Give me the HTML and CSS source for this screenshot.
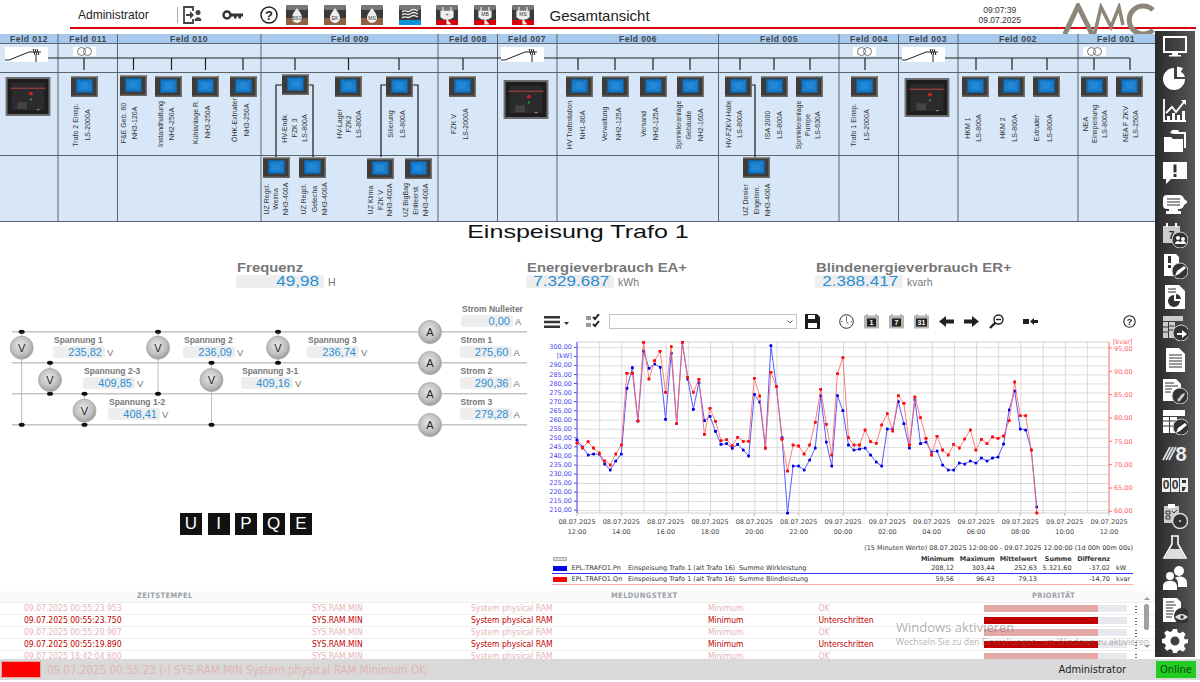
FILE: index.html
```html
<!DOCTYPE html>
<html lang="de">
<head>
<meta charset="utf-8">
<title>Gesamtansicht</title>
<link rel="stylesheet" href="styles.css">
</head>
<body>
<div class="app">
  <header class="top">
    <div class="top-bar">
      <span class="user">Administrator</span>
      <span class="sep"></span>
      <svg class="ic-logout" viewBox="0 0 19 18"><path d="M10 5V1H1v16h9v-4" fill="none" stroke="#444" stroke-width="1.800"/><path d="M3 8h4V5l4 4-4 4v-3H3z" fill="#444"/><circle cx="15" cy="6.500" r="2.500" fill="#444"/><path d="M11.500 15c0-5 7-5 7 0z" fill="#444"/></svg>
      <svg class="ic-key" viewBox="0 0 21 12"><circle cx="5" cy="6" r="3.500" fill="none" stroke="#333" stroke-width="2.400"/><path d="M8 4.500h13v3h-2v2h-2.500v-2h-2v2H12v-2H8z" fill="#333"/></svg>
      <svg class="ic-help" viewBox="0 0 18 18"><circle cx="9" cy="9" r="8" fill="none" stroke="#222" stroke-width="1.500"/><text x="9" y="13.500" class="help-q">?</text></svg>
      <div class="top-btns">
        <svg class="tbtn" viewBox="0 0 22 20"><use href="#drop"/><rect y="13" width="22" height="7" fill="#8f5f43"/><path d="M11 3c2 3 5 6 5 10a5 5 0 0 1-10 0c0-4 3-7 5-10z" fill="#eee"/><text x="11" y="15" class="tbtn-t">BSG</text></svg>
        <svg class="tbtn" viewBox="0 0 22 20"><use href="#drop"/><rect y="13" width="22" height="7" fill="#8f5f43"/><path d="M11 3c2 3 5 6 5 10a5 5 0 0 1-10 0c0-4 3-7 5-10z" fill="#eee"/><text x="11" y="15" class="tbtn-t">EK</text></svg>
        <svg class="tbtn" viewBox="0 0 22 20"><use href="#drop"/><rect y="13" width="22" height="7" fill="#8f5f43"/><path d="M11 3c2 3 5 6 5 10a5 5 0 0 1-10 0c0-4 3-7 5-10z" fill="#eee"/><text x="11" y="15" class="tbtn-t">MS</text></svg>
        <svg class="tbtn" viewBox="0 0 22 20"><use href="#drop"/><rect y="15" width="22" height="5" fill="#0d8fdc"/><path d="M3 7c3-3 5 1 8-1s4-2 8 0M3 10c3-3 5 1 8-1s4-2 8 0M3 13c3-3 5 1 8-1s4-2 8 0" fill="none" stroke="#eee" stroke-width="1.300"/></svg>
        <svg class="tbtn" viewBox="0 0 22 20"><use href="#drop"/><rect y="15" width="22" height="5" fill="#d8000c"/><path d="M7 2v4M15 2v4M5 6h12v6l-3 2H8l-3-2zM11 14v5h4" fill="#eee" stroke="#eee" stroke-width="1.200"/><text x="11" y="11" class="tbtn-t">+</text></svg>
        <svg class="tbtn" viewBox="0 0 22 20"><use href="#drop"/><rect y="15" width="22" height="5" fill="#d8000c"/><path d="M7 2v4M15 2v4M5 6h12v6l-3 2H8l-3-2zM11 14v5h4" fill="#eee" stroke="#eee" stroke-width="1.200"/><text x="11" y="11" class="tbtn-t">MB</text></svg>
        <svg class="tbtn" viewBox="0 0 22 20"><use href="#drop"/><rect y="15" width="22" height="5" fill="#d8000c"/><path d="M7 2v4M15 2v4M5 6h12v6l-3 2H8l-3-2zM11 14v5h4" fill="#eee" stroke="#eee" stroke-width="1.200"/><text x="11" y="11" class="tbtn-t">MS</text></svg>
      </div>
      <span class="page-title">Gesamtansicht</span>
      <div class="clock">09:07:39<br>09.07.2025</div>
    </div>
    <svg class="logo" viewBox="0 0 92 33"><g fill="none" stroke="#8c8778"><path d="M1 33 15 3l15 30" stroke-width="5"/><path d="M31 33 38 4l10 20 8-20 4 18" stroke-width="3.500"/><path d="M90 7a14 14 0 1 0 0 20" stroke-width="5"/></g></svg>
  </header>

  <div class="middle">
    <main class="main">
      <svg class="feld" viewBox="0 31 1155 192">
        <defs>
          <symbol id="drop" viewBox="0 0 22 20"><rect width="22" height="20" rx="2" fill="#3a3a3a"/><rect width="22" height="5" rx="2" fill="#777"/></symbol>
          <symbol id="m" viewBox="0 0 27 21"><rect width="27" height="21" fill="#3f3b38"/><rect width="27" height="1.500" fill="#8a8a88"/><rect x="25.500" width="1.500" height="21" fill="#77736e"/><rect y="19.500" width="27" height="1.500" fill="#6b6763"/><rect x="5" y="3" width="17" height="14" fill="#15609f"/><rect x="6.500" y="4.500" width="14" height="11" fill="#1a7fcf"/><rect x="10" y="7" width="7" height="6" fill="#2288d8"/></symbol>
          <symbol id="b" viewBox="0 0 46 40"><rect width="46" height="40" fill="#6f6f6f"/><rect x="2" y="2" width="42" height="36" fill="#1e1e20"/><rect x="6" y="6" width="34" height="28" fill="#2b2b2d"/><rect x="5" y="11" width="36" height="1" fill="#b44"/><circle cx="26" cy="17" r="2" fill="#c22"/><circle cx="26" cy="23" r="1" fill="#4a4"/><rect x="12" y="26" width="10" height="7" fill="#444"/><rect x="32" y="33" width="3" height="1" fill="#999"/></symbol>
          <symbol id="brk" viewBox="0 0 43 15"><rect width="43" height="15" fill="#fff"/><path d="M0 13h4L24 5h12M28 2l2 6M30 2l2 6M32 2l2 6M31 8v7" fill="none" stroke="#222" stroke-width="1"/></symbol>
          <symbol id="tr" viewBox="0 0 23 9"><rect width="23" height="9" fill="#fff"/><circle cx="8.500" cy="4.500" r="4" fill="none" stroke="#777"/><circle cx="14.500" cy="4.500" r="4" fill="none" stroke="#777"/></symbol>
        </defs>
        <rect x="0" y="34" width="1155" height="188" fill="#d8e7f7"/>
        <rect x="0" y="34" width="1155" height="9" fill="#a7c9ec"/>
        <path class="grid-line" d="M0 43.500H1155M0 72.500H1155M0 155.500H1155M0 221.500H1155M58 34V222M117.500 34V222M261 34V222M438 34V222M497.500 34V222M557 34V222M718.500 34V222M839 34V222M898.500 34V222M958 34V222M1078 34V222"/>
        <g class="feld-head">
          <text x="29" y="39">Feld 012</text><text x="88" y="39">Feld 011</text><text x="189" y="39">Feld 010</text><text x="350" y="39">Feld 009</text><text x="468" y="39">Feld 008</text><text x="527" y="39">Feld 007</text><text x="638" y="39">Feld 006</text><text x="779" y="39">Feld 005</text><text x="869" y="39">Feld 004</text><text x="928" y="39">Feld 003</text><text x="1018" y="39">Feld 002</text><text x="1116" y="39">Feld 001</text>
        </g>
        <path class="bus" d="M5 58H1130M84 58V70M133.500 58V70M171.500 58V70M205.500 58V70M243 58V70M295 58V70M348.500 58V70M399 58V70M463 58V70M578 58V70M615 58V70M653 58V70M690 58V70M740 58V70M774 58V70M810 58V70M865 58V70M976 58V70M1012 58V70M1047 58V70M1094 58V70M1130 58V70"/>
        <use href="#brk" x="5" y="47" width="43" height="15"/><use href="#brk" x="501" y="47" width="43" height="15"/><use href="#brk" x="902" y="47" width="43" height="15"/>
        <use href="#tr" x="73" y="47" width="23" height="9"/><use href="#tr" x="853" y="47" width="23" height="9"/><use href="#tr" x="1083" y="47" width="23" height="9"/>
        <path class="link" d="M282 85H276V157M309 85H313V157M386 85H381V157M413 85H418V157M752 85H755V157"/>
        <g>
          <use href="#b" x="5" y="77" width="46" height="39"/><use href="#b" x="503" y="80" width="46" height="39"/><use href="#b" x="904" y="78" width="46" height="39"/>
          <use href="#m" x="71" y="76" width="27" height="21"/><use href="#m" x="120" y="75" width="27" height="21"/><use href="#m" x="155" y="76" width="27" height="21"/><use href="#m" x="192" y="76" width="27" height="21"/><use href="#m" x="230" y="76" width="27" height="21"/><use href="#m" x="282" y="74" width="27" height="21"/><use href="#m" x="335" y="76" width="27" height="21"/><use href="#m" x="386" y="76" width="27" height="21"/><use href="#m" x="449" y="76" width="27" height="21"/><use href="#m" x="566" y="76" width="27" height="21"/><use href="#m" x="602" y="76" width="27" height="21"/><use href="#m" x="640" y="76" width="27" height="21"/><use href="#m" x="677" y="76" width="27" height="21"/><use href="#m" x="725" y="76" width="27" height="21"/><use href="#m" x="761" y="76" width="27" height="21"/><use href="#m" x="796" y="76" width="27" height="21"/><use href="#m" x="851" y="76" width="27" height="21"/><use href="#m" x="962" y="76" width="27" height="21"/><use href="#m" x="998" y="76" width="27" height="21"/><use href="#m" x="1033" y="76" width="27" height="21"/><use href="#m" x="1081" y="76" width="27" height="21"/><use href="#m" x="1116" y="76" width="27" height="21"/>
          <use href="#m" x="263" y="157" width="27" height="21"/><use href="#m" x="299" y="157" width="27" height="21"/><use href="#m" x="367" y="158" width="27" height="21"/><use href="#m" x="405" y="158" width="27" height="21"/><use href="#m" x="743" y="157" width="27" height="21"/>
        </g>
        <g class="vlab">
          <text transform="translate(75 125) rotate(-90)">Trafo 2 Einsp.</text><text transform="translate(87 125) rotate(-90)">LS-2000A</text>
          <text transform="translate(123 123) rotate(-90)">F&amp;E Geb. 60</text><text transform="translate(134 123) rotate(-90)">NH3-120A</text>
          <text transform="translate(160 124) rotate(-90)">Instandhaltung</text><text transform="translate(171 124) rotate(-90)">NH2-250A</text>
          <text transform="translate(195 122) rotate(-90)">Kühlanlage R.</text><text transform="translate(207 122) rotate(-90)">NH3-250A</text>
          <text transform="translate(234 120) rotate(-90)">ÖHK-Extruder</text><text transform="translate(246 120) rotate(-90)">NH3-250A</text>
          <text transform="translate(284 128) rotate(-90)">HV-Endk.</text><text transform="translate(294 128) rotate(-90)">FZK 3</text><text transform="translate(304 128) rotate(-90)">LS-800A</text>
          <text transform="translate(339 124) rotate(-90)">HV-Lager</text><text transform="translate(348 124) rotate(-90)">FZK2</text><text transform="translate(358 124) rotate(-90)">LS-800A</text>
          <text transform="translate(390 124) rotate(-90)">Silierung</text><text transform="translate(402 124) rotate(-90)">LS-800A</text>
          <text transform="translate(453 124) rotate(-90)">FZK V</text><text transform="translate(465 124) rotate(-90)">LS-2000A</text>
          <text transform="translate(569.500 125) rotate(-90)">HV Trafostation</text><text transform="translate(582 125) rotate(-90)">NH1-80A</text>
          <text transform="translate(604.500 124) rotate(-90)">Verwaltung</text><text transform="translate(618 124) rotate(-90)">NH2-125A</text>
          <text transform="translate(643 124) rotate(-90)">Versand</text><text transform="translate(655 124) rotate(-90)">NH2-125A</text>
          <text transform="translate(678 125) rotate(-90)">Sprinkleranlage</text><text transform="translate(688 125) rotate(-90)">Gebäude</text><text transform="translate(700 125) rotate(-90)">NH2-160A</text>
          <text transform="translate(728 124) rotate(-90)">HV-FZKV-Halle</text><text transform="translate(739.500 124) rotate(-90)">LS-800A</text>
          <text transform="translate(767 125) rotate(-90)">ISA 2000</text><text transform="translate(779.500 125) rotate(-90)">LS-800A</text>
          <text transform="translate(798 125) rotate(-90)">Sprinkleranlage</text><text transform="translate(807 125) rotate(-90)">Pumpe</text><text transform="translate(817 125) rotate(-90)">LS-630A</text>
          <text transform="translate(853.500 125) rotate(-90)">Trafo 1 Einsp.</text><text transform="translate(866 125) rotate(-90)">LS-2000A</text>
          <text transform="translate(967.500 128) rotate(-90)">HKM 1</text><text transform="translate(978 128) rotate(-90)">LS-800A</text>
          <text transform="translate(1002 128) rotate(-90)">HKM 2</text><text transform="translate(1014 128) rotate(-90)">LS-800A</text>
          <text transform="translate(1036 128) rotate(-90)">Extruder</text><text transform="translate(1049 128) rotate(-90)">LS-800A</text>
          <text transform="translate(1085 124) rotate(-90)">NEA</text><text transform="translate(1094 124) rotate(-90)">Einspeisung</text><text transform="translate(1104.500 124) rotate(-90)">LS-800A</text>
          <text transform="translate(1125 124) rotate(-90)">NEA F ZKV</text><text transform="translate(1135.500 124) rotate(-90)">LS-250A</text>
          <text transform="translate(266 199) rotate(-90)">UZ Regcl.</text><text transform="translate(275.500 199) rotate(-90)">Weima</text><text transform="translate(285 199) rotate(-90)">NH3-400A</text>
          <text transform="translate(303.500 199) rotate(-90)">UZ Regcl.</text><text transform="translate(314 199) rotate(-90)">Getecha</text><text transform="translate(324 199) rotate(-90)">NH3-400A</text>
          <text transform="translate(370.500 200) rotate(-90)">UZ Klima</text><text transform="translate(380 200) rotate(-90)">FZK V</text><text transform="translate(389.500 200) rotate(-90)">NH3-400A</text>
          <text transform="translate(405.500 200) rotate(-90)">UZ BigBag</text><text transform="translate(415 200) rotate(-90)">Entleerst.</text><text transform="translate(425.500 200) rotate(-90)">NH3-400A</text>
          <text transform="translate(745.500 200) rotate(-90)">UZ Dosier</text><text transform="translate(756 200) rotate(-90)">Engelsm.</text><text transform="translate(767 200) rotate(-90)">NH3-400A</text>
        </g>
      </svg>

      <h1 class="section-title"><span>Einspeisung Trafo 1</span></h1>

      <section class="energy">
        <div class="kpi"><div class="kpi-label"><span>Frequenz</span></div><div class="kpi-row"><span class="kpi-box"><span>49,98</span></span><span class="kpi-unit">H</span></div></div>
        <div class="kpi"><div class="kpi-label"><span>Energieverbrauch EA+</span></div><div class="kpi-row"><span class="kpi-box"><span>7.329.687</span></span><span class="kpi-unit">kWh</span></div></div>
        <div class="kpi"><div class="kpi-label"><span>Blindenergieverbrauch ER+</span></div><div class="kpi-row"><span class="kpi-box"><span>2.388.417</span></span><span class="kpi-unit">kvarh</span></div></div>
      </section>

      <div class="mid">
        <section class="left-col">
          <div class="wiring">
            <svg class="wiring-svg" viewBox="0 305 540 140">
              <path class="rail" d="M12 331.700H527M12 362.700H527M12 393.700H527M12 424.700H527"/>
              <path class="wire" d="M21.700 331.700V424.700M50 362.700V393.700M84.500 393.700V424.700M158 331.700V393.700M211.500 362.700V424.700M278 331.700V362.700"/>
              <g class="nodes">
                <ellipse cx="21.700" cy="331.700" rx="3" ry="2"/><ellipse cx="21.700" cy="424.700" rx="3" ry="2"/><ellipse cx="50" cy="362.700" rx="3" ry="2"/><ellipse cx="50" cy="393.700" rx="3" ry="2"/><ellipse cx="84.500" cy="393.700" rx="3" ry="2"/><ellipse cx="84.500" cy="424.700" rx="3" ry="2"/><ellipse cx="158" cy="331.700" rx="3" ry="2"/><ellipse cx="158" cy="393.700" rx="3" ry="2"/><ellipse cx="211.500" cy="362.700" rx="3" ry="2"/><ellipse cx="211.500" cy="424.700" rx="3" ry="2"/><ellipse cx="278" cy="331.700" rx="3" ry="2"/><ellipse cx="278" cy="362.700" rx="3" ry="2"/>
              </g>
              <defs><radialGradient id="ball" cx=".45" cy=".4" r=".6"><stop offset="0" stop-color="#e8e8e8"/><stop offset=".7" stop-color="#bdbdbd"/><stop offset="1" stop-color="#9a9a9a"/></radialGradient></defs>
              <g class="meters">
                <circle cx="21.700" cy="347.700" r="11.500"/><circle cx="50" cy="380" r="11.500"/><circle cx="84.500" cy="410.700" r="11.500"/><circle cx="158" cy="347.700" r="11.500"/><circle cx="211.500" cy="380" r="11.500"/><circle cx="278" cy="347.700" r="11.500"/>
                <circle cx="430" cy="332" r="11.500"/><circle cx="430" cy="363" r="11.500"/><circle cx="430" cy="394" r="11.500"/><circle cx="430" cy="425" r="11.500"/>
              </g>
              <g class="meter-t">
                <text x="21.700" y="351.500">V</text><text x="50" y="384">V</text><text x="84.500" y="414.500">V</text><text x="158" y="351.500">V</text><text x="211.500" y="384">V</text><text x="278" y="351.500">V</text>
                <text x="430" y="336">A</text><text x="430" y="367">A</text><text x="430" y="398">A</text><text x="430" y="429">A</text>
              </g>
            </svg>
            <div class="rd u1"><div class="rd-l">Spannung 1</div><div class="rd-r"><span class="rd-v">235,82</span><span class="rd-u">V</span></div></div>
            <div class="rd u2"><div class="rd-l">Spannung 2</div><div class="rd-r"><span class="rd-v">236,09</span><span class="rd-u">V</span></div></div>
            <div class="rd u3"><div class="rd-l">Spannung 3</div><div class="rd-r"><span class="rd-v">236,74</span><span class="rd-u">V</span></div></div>
            <div class="rd u23"><div class="rd-l">Spannung 2-3</div><div class="rd-r"><span class="rd-v">409,85</span><span class="rd-u">V</span></div></div>
            <div class="rd u31"><div class="rd-l">Spannung 3-1</div><div class="rd-r"><span class="rd-v">409,16</span><span class="rd-u">V</span></div></div>
            <div class="rd u12"><div class="rd-l">Spannung 1-2</div><div class="rd-r"><span class="rd-v">408,41</span><span class="rd-u">V</span></div></div>
            <div class="rd i0"><div class="rd-l">Strom Nulleiter</div><div class="rd-r"><span class="rd-v">0,00</span><span class="rd-u">A</span></div></div>
            <div class="rd i1"><div class="rd-l">Strom 1</div><div class="rd-r"><span class="rd-v">275,60</span><span class="rd-u">A</span></div></div>
            <div class="rd i2"><div class="rd-l">Strom 2</div><div class="rd-r"><span class="rd-v">290,36</span><span class="rd-u">A</span></div></div>
            <div class="rd i3"><div class="rd-l">Strom 3</div><div class="rd-r"><span class="rd-v">279,28</span><span class="rd-u">A</span></div></div>
          </div>
          <div class="tabs"><span>U</span><span>I</span><span>P</span><span>Q</span><span>E</span></div>
        </section>

        <section class="chart">
          <div class="toolbar">
            <div class="tb-ham"><svg class="tb16" viewBox="0 0 16 12"><path d="M0 0h16v2.500H0zM0 4.700h16v2.500H0zM0 9.400h16V12H0z" fill="#333"/></svg><svg class="tb-caret" viewBox="0 0 5 3"><path d="M0 0h5L2.500 3z" fill="#333"/></svg></div>
            <svg class="tb15 tb-check" viewBox="0 0 15 15"><path d="M0 2h5v4H0zM0 9h5v4H0z" fill="#999"/><path d="M7 3l2 2 4-5M7 10l2 2 4-5" fill="none" stroke="#222" stroke-width="2"/></svg>
            <div class="tb-select"><svg class="tb-chev" viewBox="0 0 6 4"><path d="M.5.500 3 3 5.500.500" fill="none" stroke="#668" stroke-width="1"/></svg></div>
            <svg class="tb15 tb-save" viewBox="0 0 15 15"><path d="M0 0h12l3 3v12H0z" fill="#1c1c1c"/><path d="M3 1h7v4H3zM3 9h9v5H3z" fill="#fff"/></svg>
            <div class="tb-group">
              <svg class="tb15" viewBox="0 0 15 15"><circle cx="7.500" cy="7.500" r="6.800" fill="none" stroke="#333"/><path d="M7.500 2v5.500l2 3M2 7.500h1.500M11.500 7.500H13" fill="none" stroke="#555" stroke-width=".8"/></svg>
              <svg class="tb15" viewBox="0 0 15 15"><rect y="1.500" width="15" height="13" fill="#b5b5b5"/><path d="M3 0v2M12 0v2" stroke="#888"/><rect x="3" y="4.500" width="9" height="8" fill="#222"/><text x="7.500" y="11.300" class="cal-t">1</text></svg>
              <svg class="tb15" viewBox="0 0 15 15"><rect y="1.500" width="15" height="13" fill="#b5b5b5"/><path d="M3 0v2M12 0v2" stroke="#888"/><rect x="3" y="4.500" width="9" height="8" fill="#222"/><text x="7.500" y="11.300" class="cal-t">7</text></svg>
              <svg class="tb15" viewBox="0 0 15 15"><rect y="1.500" width="15" height="13" fill="#b5b5b5"/><path d="M3 0v2M12 0v2" stroke="#888"/><rect x="2" y="4.500" width="11" height="8" fill="#222"/><text x="7.500" y="11.300" class="cal-t">31</text></svg>
              <svg class="tb15" viewBox="0 0 15 15"><path d="M0 7.500 7 2v3.500h8v4H7V13z" fill="#222"/></svg>
              <svg class="tb15" viewBox="0 0 15 15"><path d="M15 7.500 8 2v3.500H0v4h8V13z" fill="#222"/></svg>
              <svg class="tb15" viewBox="0 0 15 15"><circle cx="9.500" cy="5.500" r="4.500" fill="#fff" stroke="#222" stroke-width="1.400"/><path d="M7 5.500h5" stroke="#222" stroke-width="1.400"/><path d="M6.200 8.800 1 14" stroke="#222" stroke-width="2.400"/></svg>
            </div>
            <svg class="tb15 tb-collapse" viewBox="0 0 15 15"><rect y="5" width="6" height="5" fill="#222"/><path d="M7 7.500 11 4v2h4v3h-4v2z" fill="#222"/></svg>
            <svg class="tb13 tb-help" viewBox="0 0 13 13"><circle cx="6.500" cy="6.500" r="5.700" fill="none" stroke="#222" stroke-width="1.100"/><text x="6.500" y="9.700" class="tb-q">?</text></svg>
          </div>

          <svg class="plot" viewBox="540 335 615 219">
            <defs>
              <pattern id="gridp" x="577" y="347.300" width="22.170" height="9.050" patternUnits="userSpaceOnUse"><path d="M0 .5H22.170M.5 0V9.050" fill="none" stroke="#d9d9d9" stroke-width="1"/></pattern>
              <marker id="mb" viewBox="0 0 4 4" refX="2" refY="2" markerWidth="3.200" markerHeight="3.200" markerUnits="userSpaceOnUse"><circle cx="2" cy="2" r="2" fill="#0000ee"/></marker>
              <marker id="mr" viewBox="0 0 4 4" refX="2" refY="2" markerWidth="3.400" markerHeight="3.400" markerUnits="userSpaceOnUse"><circle cx="2" cy="2" r="2" fill="#ff1010"/></marker>
            </defs>
            <rect x="577" y="342" width="532" height="171" fill="url(#gridp)"/>
            <path class="plot-edge" d="M577 342H1109M577 513H1109"/>
            <path class="ax-b" d="M577 342V513M574 347.300h3M574 356.400h3M574 365.400h3M574 374.500h3M574 383.500h3M574 392.600h3M574 401.600h3M574 410.700h3M574 419.700h3M574 428.800h3M574 437.800h3M574 446.900h3M574 455.900h3M574 465h3M574 474h3M574 483.100h3M574 492.100h3M574 501.200h3M574 510.200h3"/>
            <path class="ax-r" d="M1109 342V513M1109 348h3M1109 371.300h3M1109 394.600h3M1109 418h3M1109 441.300h3M1109 464.600h3M1109 488h3M1109 511.300h3"/>
            <path class="ax-x" d="M577 513v3M621.300 513v3M665.700 513v3M710 513v3M754.300 513v3M798.700 513v3M843 513v3M887.300 513v3M931.700 513v3M976 513v3M1020.300 513v3M1064.700 513v3M1109 513v3"/>
            <g class="lab-l">
              <text x="572" y="347.300">300,00</text><text x="572" y="356.400">[kW]</text><text x="572" y="365.400">290,00</text><text x="572" y="374.500">285,00</text><text x="572" y="383.500">280,00</text><text x="572" y="392.600">275,00</text><text x="572" y="401.600">270,00</text><text x="572" y="410.700">265,00</text><text x="572" y="419.700">260,00</text><text x="572" y="428.800">255,00</text><text x="572" y="437.800">250,00</text><text x="572" y="446.900">245,00</text><text x="572" y="455.900">240,00</text><text x="572" y="465">235,00</text><text x="572" y="474">230,00</text><text x="572" y="483.100">225,00</text><text x="572" y="492.100">220,00</text><text x="572" y="501.200">215,00</text><text x="572" y="510.200">210,00</text>
            </g>
            <g class="lab-r">
              <text x="1113" y="342">[kvar]</text><text x="1114" y="348.500">95,00</text><text x="1114" y="371.500">90,00</text><text x="1114" y="395">85,00</text><text x="1114" y="418.300">80,00</text><text x="1114" y="441.700">75,00</text><text x="1114" y="465">70,00</text><text x="1114" y="488">65,00</text><text x="1114" y="511">60,00</text>
            </g>
            <g class="lab-x">
              <text x="577" y="524">08.07.2025<tspan x="577" dy="9.500">12:00</tspan></text><text x="621.300" y="524">08.07.2025<tspan x="621.300" dy="9.500">14:00</tspan></text><text x="665.700" y="524">08.07.2025<tspan x="665.700" dy="9.500">16:00</tspan></text><text x="710" y="524">08.07.2025<tspan x="710" dy="9.500">18:00</tspan></text><text x="754.300" y="524">08.07.2025<tspan x="754.300" dy="9.500">20:00</tspan></text><text x="798.700" y="524">08.07.2025<tspan x="798.700" dy="9.500">22:00</tspan></text><text x="843" y="524">09.07.2025<tspan x="843" dy="9.500">00:00</tspan></text><text x="887.300" y="524">09.07.2025<tspan x="887.300" dy="9.500">02:00</tspan></text><text x="931.700" y="524">09.07.2025<tspan x="931.700" dy="9.500">04:00</tspan></text><text x="976" y="524">09.07.2025<tspan x="976" dy="9.500">06:00</tspan></text><text x="1020.300" y="524">09.07.2025<tspan x="1020.300" dy="9.500">08:00</tspan></text><text x="1064.700" y="524">09.07.2025<tspan x="1064.700" dy="9.500">10:00</tspan></text><text x="1109" y="524">09.07.2025<tspan x="1109" dy="9.500">12:00</tspan></text>
            </g>
            <text class="range" x="1133" y="550">(15 Minuten Werte) 08.07.2025 12:00:00 - 09.07.2025 12:00:00 (1d 00h 00m 00s)</text>
            <polyline class="s-blue" points="577,440 582.500,447 588.100,455 593.600,454 599.200,454 604.700,464 610.200,470 615.800,461 621.300,454 626.900,388.300 632.400,367.700 637.900,421 643.500,351 649,368.300 654.600,364 660.100,367.300 665.600,419.300 671.200,353.300 676.700,423.700 682.300,342.300 687.800,379 693.300,409.300 698.900,382.700 704.400,420.700 710,416.300 715.500,431.300 721,444.300 726.600,443.700 732.100,448.300 737.700,444.300 743.200,450 748.700,456 754.300,394.300 759.800,402 765.400,448 770.900,345.700 776.400,386.700 782,437.700 787.500,513 793.100,466 798.600,466 804.100,470 809.700,460 815.200,448 820.800,395.700 826.300,442 831.800,466 837.400,395.700 842.900,410.700 848.500,445 854,450 859.500,449 865.100,448 870.600,455 876.200,462 881.700,466 887.200,429 892.800,429 898.300,401.700 903.900,423.700 909.400,448 914.900,399.700 920.500,443.700 926,442 931.600,452 937.100,451 942.600,465 948.200,470 953.700,470 959.300,463 964.800,464 970.300,461 975.900,463 981.400,458 987,461 992.500,458 998,457 1003.600,444 1009.100,410 1014.700,391 1020.200,429 1025.700,430 1031.300,450 1036.800,507"/>
            <polyline class="s-red" points="577,443 582.500,448 588.100,441.700 593.600,448 599.200,453 604.700,461 610.200,465 615.800,454 621.300,445 626.900,373.300 632.400,373.300 637.900,421 643.500,342.300 649,379 654.600,360.700 660.100,351.300 665.600,392.300 671.200,346.700 676.700,423.700 682.300,342.300 687.800,377.300 693.300,392.300 698.900,379.300 704.400,434.300 710,408.300 715.500,421.300 721,440.700 726.600,439.700 732.100,445.700 737.700,437.300 743.200,441.300 748.700,441.300 754.300,378.300 759.800,396 765.400,448 770.900,372.300 776.400,386.700 782,439.300 787.500,471 793.100,445 798.600,446 804.100,454 809.700,445 815.200,422.300 820.800,389.300 826.300,424.300 831.800,455 837.400,373.700 842.900,357.700 848.500,437.700 854,445 859.500,445 865.100,430 870.600,441.700 876.200,443.300 881.700,425 887.200,413.700 892.800,431 898.300,395.700 903.900,403.300 909.400,445 914.900,397 920.500,417.700 926,438.300 931.600,455 937.100,436.300 942.600,450 948.200,455 953.700,444.300 959.300,448 964.800,439 970.300,430 975.900,450 981.400,439.300 987,443.700 992.500,437 998,438.300 1003.600,436 1009.100,420.700 1014.700,382 1020.200,415.700 1025.700,415.700 1031.300,450 1036.800,513"/>
          </svg>

          <div class="legend">
            <div class="lg-row lg-head"><span class="lg-toggle"></span><span></span><span></span><span></span><span class="n">Minimum</span><span class="n">Maximum</span><span class="n">Mittelwert</span><span class="n">Summe</span><span class="n">Differenz</span><span></span></div>
            <div class="lg-row lg-blue"><span class="sw sw-blue"></span><span>EPL.TRAFO1.Pn</span><span>Einspeisung Trafo 1 (alt Trafo 16)</span><span>Summe Wirkleistung</span><span class="n">208,12</span><span class="n">303,44</span><span class="n">252,63</span><span class="n">5.321,60</span><span class="n">-37,02</span><span class="u">kW</span></div>
            <div class="lg-row lg-red"><span class="sw sw-red"></span><span>EPL.TRAFO1.Qn</span><span>Einspeisung Trafo 1 (alt Trafo 16)</span><span>Summe Blindleistung</span><span class="n">59,56</span><span class="n">96,43</span><span class="n">79,13</span><span class="n"></span><span class="n">-14,70</span><span class="u">kvar</span></div>
          </div>
        </section>
      </div>

      <section class="alarms">
        <div class="al-head"><span>ZEITSTEMPEL</span><span>MELDUNGSTEXT</span><span>PRIORITÄT</span></div>
        <div class="al-row off"><span>09.07.2025 00:55:23.953</span><span>SYS.RAM.MIN</span><span>System physical RAM</span><span>Minimum</span><span>OK</span><span class="track"><i class="fill" style="width:80%"></i></span><i class="dots"></i></div>
        <div class="al-row"><span>09.07.2025 00:55:23.750</span><span>SYS.RAM.MIN</span><span>System physical RAM</span><span>Minimum</span><span>Unterschritten</span><span class="track"><i class="fill" style="width:80%"></i></span><i class="dots"></i></div>
        <div class="al-row off"><span>09.07.2025 00:55:20.907</span><span>SYS.RAM.MIN</span><span>System physical RAM</span><span>Minimum</span><span>OK</span><span class="track"><i class="fill" style="width:80%"></i></span><i class="dots"></i></div>
        <div class="al-row"><span>09.07.2025 00:55:19.890</span><span>SYS.RAM.MIN</span><span>System physical RAM</span><span>Minimum</span><span>Unterschritten</span><span class="track"><i class="fill" style="width:80%"></i></span><i class="dots"></i></div>
        <div class="al-row off"><span>09.07.2025 18:42:04.600</span><span>SYS.RAM.MIN</span><span>System physical RAM</span><span>Minimum</span><span>OK</span><span class="track"><i class="fill" style="width:80%"></i></span><i class="dots"></i></div>
        <div class="scroll"><i class="sc-up"></i><i class="sc-thumb"></i><i class="sc-down"></i></div>
        <div class="watermark"><div class="wm-a">Windows aktivieren</div><div class="wm-b">Wechseln Sie zu den Einstellungen, um Windows zu aktivieren.</div></div>
      </section>
    </main>

    <nav class="side">
      <svg viewBox="0 0 26 26"><rect x="2" y="3" width="22" height="15" fill="none" stroke="#fff" stroke-width="2"/><path d="M10 18h6v3h-6zM7 21h12v1.500H7z" fill="#fff"/></svg>
      <svg viewBox="0 0 26 26"><path d="M12 3a11 11 0 1 0 11 11H12z" fill="#fff"/><path d="M15 1.500 21 3l-5 9h-1z" fill="#fff"/><path d="M18 6a11 11 0 0 1 5 6h-8z" fill="#fff"/></svg>
      <svg viewBox="0 0 26 26"><path d="M2 2v22h22" fill="none" stroke="#fff" stroke-width="1.800"/><path d="M4 16l6-6 4 5 8-10" fill="none" stroke="#fff" stroke-width="2"/><path d="M19 3h5v5zM5 19h3v4H5zM10 16h3v7h-3zM15 18h3v5h-3zM20 14h3v9h-3z" fill="#fff"/></svg>
      <svg viewBox="0 0 26 26"><path d="M8 5l2-3h6l1 2h7v16h-2V6H12z" fill="#fff"/><path d="M2 9h7l2 2h10v13H2z" fill="#fff"/></svg>
      <svg viewBox="0 0 26 26"><path d="M1 3h24v17H9l-5 5v-5H1z" fill="#fff"/><path d="M11.500 5.500h3v8h-3zM11.500 15h3v3h-3z" fill="#333"/></svg>
      <svg viewBox="0 0 26 26"><path d="M5 5h13a5 5 0 0 1 4 4l3 2v2l-3 2a5 5 0 0 1-4 4H5a4 4 0 0 1-4-4V9a4 4 0 0 1 4-4z" fill="#fff"/><path d="M5 9h13M5 12h13M5 15h13" stroke="#333" stroke-width="1"/><path d="M7 19h9v2h3v3H4v-3h3z" fill="#fff"/></svg>
      <svg viewBox="0 0 26 26"><path d="M1 4h17v17H1z" fill="#ccc"/><path d="M4 1h2v4H4zM13 1h2v4h-2z" fill="#fff"/><text x="9.500" y="17" class="sd-t">7</text><circle cx="18" cy="18" r="8" fill="#333" stroke="#ccc"/><circle cx="16" cy="16" r="2" fill="#fff"/><circle cx="21" cy="17" r="2" fill="#fff"/><path d="M13 22c0-4 6-4 6 0zM18 22c0-4 6-4 6 0z" fill="#fff"/></svg>
      <svg viewBox="0 0 26 26"><path d="M2 1h12l3 3v13l-3 6H2z" fill="#fff"/><path d="M6 3h3v7H6zM6 12h3v3H6z" fill="#333"/><circle cx="18" cy="18" r="8" fill="#333" stroke="#ccc"/><path d="M13 23l2-5 7-5 2 2-7 6z" fill="#fff"/></svg>
      <svg viewBox="0 0 26 26"><path d="M3 1h14l6 6v18H3z" fill="#fff"/><path d="M6 5h8M6 8h8" stroke="#333"/><path d="M12 11a6 6 0 1 0 6 6h-6z" fill="#333"/><path d="M14 10a6 6 0 0 1 5 5h-5z" fill="#333"/></svg>
      <svg viewBox="0 0 26 26"><path d="M1 1h20v5H1zM1 7h5v16H1zM7 7h6v16H7z" fill="#ccc"/><path d="M7 11h5M7 15h5M1 12h5M1 17h5" stroke="#333"/><circle cx="19" cy="18" r="8" fill="#333" stroke="#ccc"/><path d="M15 18h5v-3l5 4-5 4v-3h-5z" fill="#fff"/></svg>
      <svg viewBox="0 0 26 26"><path d="M4 1h13l6 6v18H4z" fill="#fff"/><path d="M7 8h13M7 11h13M7 14h13M7 17h13M7 20h13" stroke="#333"/></svg>
      <svg viewBox="0 0 26 26"><path d="M1 1h13l5 5v17H1z" fill="#fff"/><path d="M3 5h9M3 8h13M3 11h7M3 14h6" stroke="#333"/><circle cx="18" cy="18" r="8" fill="#333" stroke="#ccc"/><path d="M15 22l5-6 3-1-1 3-5 6z" fill="#ccc"/></svg>
      <svg viewBox="0 0 26 26"><path d="M1 1h22v6H1zM1 8h6v16H1zM8 8h7v16H8z" fill="#fff"/><path d="M1 12h6M1 17h6M8 12h7M8 17h7" stroke="#333"/><circle cx="19" cy="18" r="8" fill="#333" stroke="#ccc"/><path d="M14 24l2-5 7-5 2 2-7 6z" fill="#fff"/></svg>
      <svg viewBox="0 0 26 26"><path d="M1 20 8 7M4 20 11 7M7 20 14 7" stroke="#ddd" stroke-width="1.800"/><text x="19" y="21" class="sd-8">8</text></svg>
      <svg viewBox="0 0 26 26"><path d="M0 6h8v14H0zM9 6h8v14H9zM18 6h8v14h-8z" fill="#eee"/><text x="4" y="17" class="sd-d">0</text><text x="13" y="17" class="sd-d">0</text><path d="M20 8h4v3h-4zM20 15h4l-2 4h-2z" fill="#333"/></svg>
      <svg viewBox="0 0 26 26"><path d="M2 3h15v17H2z" fill="#ccc"/><path d="M6 1h7v4H6z" fill="#fff"/><path d="M4 8h4v3H4zM4 13h4v3H4zM10 8l2 2 3-3" fill="none" stroke="#333"/><circle cx="18" cy="18" r="7.500" fill="#333" stroke="#ddd" stroke-width="1.400"/><circle cx="18" cy="18" r="1" fill="#ddd"/></svg>
      <svg viewBox="0 0 26 26"><path d="M9 2h8M10 2v8L2 24h22L16 10V2" fill="none" stroke="#fff" stroke-width="1.600"/><path d="M8 15h10l5 9H3z" fill="#ddd"/></svg>
      <svg viewBox="0 0 26 26"><circle cx="17" cy="6" r="5" fill="#fff"/><circle cx="8" cy="11" r="4" fill="#fff"/><path d="M1 25v-4c0-7 14-7 14 0v4zM16 22v-3c0-3-1-5-3-6 5-3 12-1 12 5v4z" fill="#fff"/></svg>
      <svg viewBox="0 0 26 26"><path d="M1 1h14l4 4v20H1z" fill="#fff"/><path d="M4 5h8M4 8h10M4 11h7M4 14h8M4 17h7M4 20h6" stroke="#333"/><circle cx="20" cy="19" r="8" fill="#333"/><path d="M13 20c4-4 9-4 13 0-4 4-9 4-13 0z" fill="#ddd"/><circle cx="20" cy="20" r="1.700" fill="#333"/></svg>
      <svg viewBox="0 0 26 26"><path d="M11 1h4l.7 3.300 2.300 1 2.900-1.800 2.800 2.800-1.800 2.900 1 2.300L26 11v4l-3.100.7-1 2.300 1.800 2.900-2.800 2.800-2.900-1.800-2.300 1L15 25h-4l-.7-3.100-2.300-1-2.900 1.800-2.800-2.800L4 18l-1-2.300L0 15v-4l3-.7 1-2.300-1.800-2.900L5 2.300l2.900 1.800 2.300-1zM13 8.500a4.500 4.500 0 1 0 0 9 4.500 4.500 0 0 0 0-9z" fill="#fff" fill-rule="evenodd"/></svg>
    </nav>
  </div>

  <footer class="status">
    <span class="st-red"></span>
    <span class="st-msg">09.07.2025 00:55:23 (-) SYS.RAM.MIN System physical RAM Minimum OK</span>
    <span class="st-user">Administrator</span>
    <span class="st-online">Online</span>
  </footer>
</div>
</body>
</html>
```

FILE: styles.css
```css
* { box-sizing: border-box; }
html, body { margin: 0; padding: 0; background: #fff; }
body { font-family: "Liberation Sans", Arial, sans-serif; color: #222; overflow: hidden; }
svg { display: block; flex: none; }

.app { width: 1200px; height: 682px; display: flex; flex-direction: column; overflow: hidden; }

/* header */
.top { height: 31px; flex: none; position: relative; padding-left: 70px; }
.top-bar { height: 29px; border-bottom: 2px solid #d8000c; display: flex; align-items: center; padding: 3px 0 0 8px; width: 1126px; }
.user { font-size: 12px; width: 69px; color: #222; }
.sep { width: 1px; height: 16px; background: #aaa; margin-left: 30px; }
.ic-logout { width: 19px; height: 18px; margin-left: 5px; }
.ic-key { width: 21px; height: 12px; margin-left: 20px; }
.ic-help { width: 18px; height: 18px; margin-left: 17px; }
.help-q { font: bold 13px "Liberation Sans", sans-serif; text-anchor: middle; fill: #222; }
.top-btns { display: flex; gap: 15.6px; margin-left: 8px; }
.tbtn { width: 22px; height: 20px; }
.tbtn-t { font: 5px "Liberation Sans", sans-serif; text-anchor: middle; fill: #333; }
.page-title { font-size: 15px; margin-left: 16px; color: #222; }
.clock { margin-left: auto; margin-right: 175px; font-size: 8.5px; line-height: 10.5px; text-align: center; color: #333; }
.logo { position: absolute; left: 1063px; top: 3px; width: 92px; height: 33px; }

/* middle */
.middle { flex: none; height: 628px; display: flex; }
.main { width: 1155px; flex: none; display: flex; flex-direction: column; position: relative; }
.side { width: 40px; height: 626px; flex: none; background: linear-gradient(90deg, #2a2a2a, #565656); display: flex; flex-direction: column; align-items: center; justify-content: space-between; padding: 3px 0; }
.side svg { width: 26px; height: 26px; }
.sd-t { font: bold 10px "Liberation Sans", sans-serif; text-anchor: middle; fill: #222; }
.sd-8 { font: bold 20px "Liberation Sans", sans-serif; text-anchor: middle; fill: #eee; }
.sd-d { font: bold 12px "Liberation Sans", sans-serif; text-anchor: middle; fill: #333; }

/* single line diagram */
.feld { width: 1155px; height: 192px; }
.grid-line { stroke: #5b6470; stroke-width: 1; fill: none; }
.feld-head text { font: bold 8.500px "Liberation Sans", sans-serif; letter-spacing: .5px; text-anchor: middle; dominant-baseline: central; fill: #3d4650; }
.bus { stroke: #222; stroke-width: 1.2; fill: none; }
.link { stroke: #1b1b1b; stroke-width: 1.2; fill: none; }
.vlab text { font: 7px "Liberation Sans", sans-serif; text-anchor: middle; dominant-baseline: central; fill: #333; }

.section-title { margin: 0; height: 18px; font-size: 19px; line-height: 18px; font-weight: 400; text-align: center; color: #111; }
.section-title span { display: inline-block; transform: scaleX(1.32); }

.energy { display: grid; grid-template-columns: 290px 289px auto; padding-left: 236px; margin: 20px 0 17px; }
.kpi-label { height: 14px; font-size: 12px; line-height: 14px; font-weight: 700; color: #777; padding-left: 1px; white-space: nowrap; }
.kpi-label span { display: inline-block; transform: scaleX(1.24); transform-origin: 0 50%; }
.kpi-row { display: flex; align-items: center; height: 13px; }
.kpi-box { width: 88px; height: 13px; background: #eee; border-radius: 3px; text-align: right; padding-right: 5px; font-size: 14px; line-height: 13px; color: #2a8fd4; }
.kpi-box span { display: inline-block; transform: scaleX(1.22); transform-origin: 100% 50%; }
.kpi-unit { font-size: 10.500px; color: #777; margin-left: 4px; }

.mid { flex: none; height: 286px; display: flex; }
.left-col { width: 540px; flex: none; }
.wiring { position: relative; width: 540px; height: 140px; }
.wiring-svg { position: absolute; inset: 0; width: 540px; height: 140px; }
.rail { stroke: #c4c4c4; stroke-width: 1.4; fill: none; }
.wire { stroke: #bcbcbc; stroke-width: 1; fill: none; }
.nodes ellipse { fill: #111; }
.meters circle { fill: url(#ball); stroke: #b0b0b0; stroke-width: 1; }
.meter-t text { font: 11px "Liberation Sans", sans-serif; text-anchor: middle; fill: #222; }

.rd { position: absolute; }
.rd-l { height: 11px; font-size: 8.500px; line-height: 10px; font-weight: 700; color: #777; padding-left: 1px; white-space: nowrap; }
.rd-r { display: flex; align-items: center; height: 12px; }
.rd-v { width: 52px; height: 12px; background: #eee; border-radius: 3px; text-align: right; padding-right: 3px; font-size: 11px; line-height: 12px; color: #2a8fd4; }
.rd-u { font-size: 9.500px; color: #777; margin-left: 2px; }
.u1 { left: 53px; top: 30px; }
.u2 { left: 183px; top: 30px; }
.u3 { left: 307px; top: 30px; }
.u23 { left: 83px; top: 61px; }
.u31 { left: 241px; top: 61px; }
.u12 { left: 108px; top: 92px; }
.i0 { left: 461px; top: -1px; }
.i1 { left: 459.500px; top: 30px; }
.i2 { left: 459.500px; top: 61px; }
.i3 { left: 459.500px; top: 92px; }

.tabs { display: flex; gap: 5.500px; margin: 68px 0 0 180px; }
.tabs span { width: 22px; height: 22px; background: #111; color: #fff; font-size: 17px; line-height: 22px; text-align: center; }

/* chart */
.chart { width: 615px; flex: none; display: flex; flex-direction: column; }
.toolbar { height: 30px; flex: none; padding: 9px 0 0 4px; display: flex; align-items: flex-start; }
.tb-ham { display: flex; align-items: center; width: 25px; height: 15px; }
.tb16 { width: 16px; height: 12px; }
.tb-caret { width: 5px; height: 3px; margin-left: 4px; margin-top: 3px; }
.tb15 { width: 15px; height: 15px; }
.tb13 { width: 13px; height: 13px; }
.tb-check { margin-left: 17px; }
.tb-select { width: 188px; height: 15px; margin-left: 8px; border: 1px solid #c4c4c4; position: relative; background: #fff; display: flex; align-items: center; justify-content: flex-end; padding-right: 3px; }
.tb-chev { width: 6px; height: 4px; }
.tb-save { margin-left: 8px; }
.tb-group { display: flex; gap: 10px; margin-left: 19px; }
.tb-collapse { margin-left: 19px; }
.tb-help { margin-left: 85px; margin-top: 1px; }
.tb-q { font: bold 9px "Liberation Sans", sans-serif; text-anchor: middle; fill: #222; }
.cal-t { font: bold 7px "Liberation Sans", sans-serif; text-anchor: middle; fill: #fff; }

.plot { width: 615px; height: 219px; }
.plot-edge { stroke: #cfcfcf; fill: none; }
.ax-b { stroke: #4a4aff; fill: none; }
.ax-r { stroke: #ff6a6a; fill: none; }
.ax-x { stroke: #bbb; fill: none; }
.lab-l text { font: 6.500px "DejaVu Sans", sans-serif; text-anchor: end; dominant-baseline: central; fill: #4646f0; }
.lab-r text { font: 6.500px "DejaVu Sans", sans-serif; dominant-baseline: central; fill: #ff6060; }
.lab-x text { font: 6.500px "DejaVu Sans", sans-serif; text-anchor: middle; fill: #444; }
.range { font: 6.500px "DejaVu Sans", sans-serif; text-anchor: end; fill: #333; }
.s-blue { fill: none; stroke: #5a5aff; stroke-width: 1; marker-start: url(#mb); marker-mid: url(#mb); marker-end: url(#mb); }
.s-red { fill: none; stroke: #ff6868; stroke-width: 1; stroke-opacity: .85; marker-start: url(#mr); marker-mid: url(#mr); marker-end: url(#mr); }

.legend { margin-left: 12px; width: 581px; }
.lg-row { display: grid; grid-template-columns: 19.600px 56.400px 111px 175px 40px 40.600px 42.400px 34.600px 38.400px 23px; height: 11px; align-items: center; font: 6.500px/10px "DejaVu Sans", sans-serif; color: #333; white-space: nowrap; }
.lg-row .n { text-align: right; }
.lg-row .u { padding-left: 6px; }
.lg-head { height: 9px; font-weight: 700; }
.lg-head .n { letter-spacing: -.1px; }
.lg-blue { border-bottom: 1px solid #3333ff; }
.lg-red { border-bottom: 1px solid #ffaaaa; }
.sw { width: 14px; height: 5px; margin-left: 1px; }
.sw-blue { background: #0000ee; }
.sw-red { background: #ff0000; }
.lg-toggle { width: 14px; height: 4px; margin-left: 1px; background: #ddd; border: 1px solid #aaa; }

/* alarms */
.alarms { flex: 1; min-height: 0; position: relative; overflow: hidden; font-family: "DejaVu Sans Condensed", "DejaVu Sans", sans-serif; background: #fff; }
.al-head { height: 12px; padding-left: 137px; background: #fafafa; border-bottom: 1px solid #eee; font-size: 7.500px; line-height: 10px; font-weight: 700; letter-spacing: .4px; color: #9aa0a8; display: grid; grid-template-columns: 474px 421px auto; white-space: nowrap; }
.al-row { display: grid; grid-template-columns: 288px 159px 237px 110.500px 165.500px 143px 28px; height: 12px; padding-left: 24px; align-items: center; border-bottom: 1px solid #eee; font-size: 8.500px; line-height: 11px; color: #c00000; white-space: nowrap; }
.al-row.off { color: #e8b4b4; }
.track { height: 7px; background: #e8e9ee; display: block; }
.fill { display: block; height: 7px; background: #c00000; }
.off .fill { background: #e3a9a9; }
.dots { display: block; width: 2px; height: 8px; margin-left: 8px; background: radial-gradient(circle, #666 1px, transparent 1px) 0 0 / 2px 3px; }
.scroll { position: absolute; left: 1142px; top: 6px; width: 9px; height: 56px; display: flex; flex-direction: column; align-items: center; }
.sc-up { width: 0; height: 0; border: 3px solid transparent; border-top: 0; border-bottom: 3px solid #999; margin-bottom: 4px; }
.sc-thumb { width: 5px; height: 26px; background: #a0a0a0; border-radius: 3px; }
.sc-down { width: 0; height: 0; border: 3px solid transparent; border-bottom: 0; border-top: 3px solid #999; margin-top: 15px; }
.watermark { position: absolute; left: 896px; top: 27px; color: rgba(110,110,110,.55); font-family: "Open Sans", sans-serif; white-space: nowrap; }
.wm-a { font-size: 13px; line-height: 18px; }
.wm-b { font-size: 8.800px; line-height: 12px; }

/* status */
.status { height: 21px; flex: none; background: #d9d9d9; display: flex; align-items: center; padding-left: 1px; margin-bottom: 2px; font-family: "DejaVu Sans Condensed", "DejaVu Sans", sans-serif; }
.st-red { width: 40px; height: 17px; background: #ff0000; border: 1px solid #e8a0a0; }
.st-msg { font-size: 11.500px; color: #e2b4b4; margin-left: 6px; white-space: nowrap; }
.st-user { margin-left: auto; font-size: 11px; color: #222; }
.st-online { width: 40px; height: 17px; margin: 0 4px 0 30px; background: #22cc22; color: #0a4a0a; font-size: 11px; line-height: 17px; text-align: center; }
```
